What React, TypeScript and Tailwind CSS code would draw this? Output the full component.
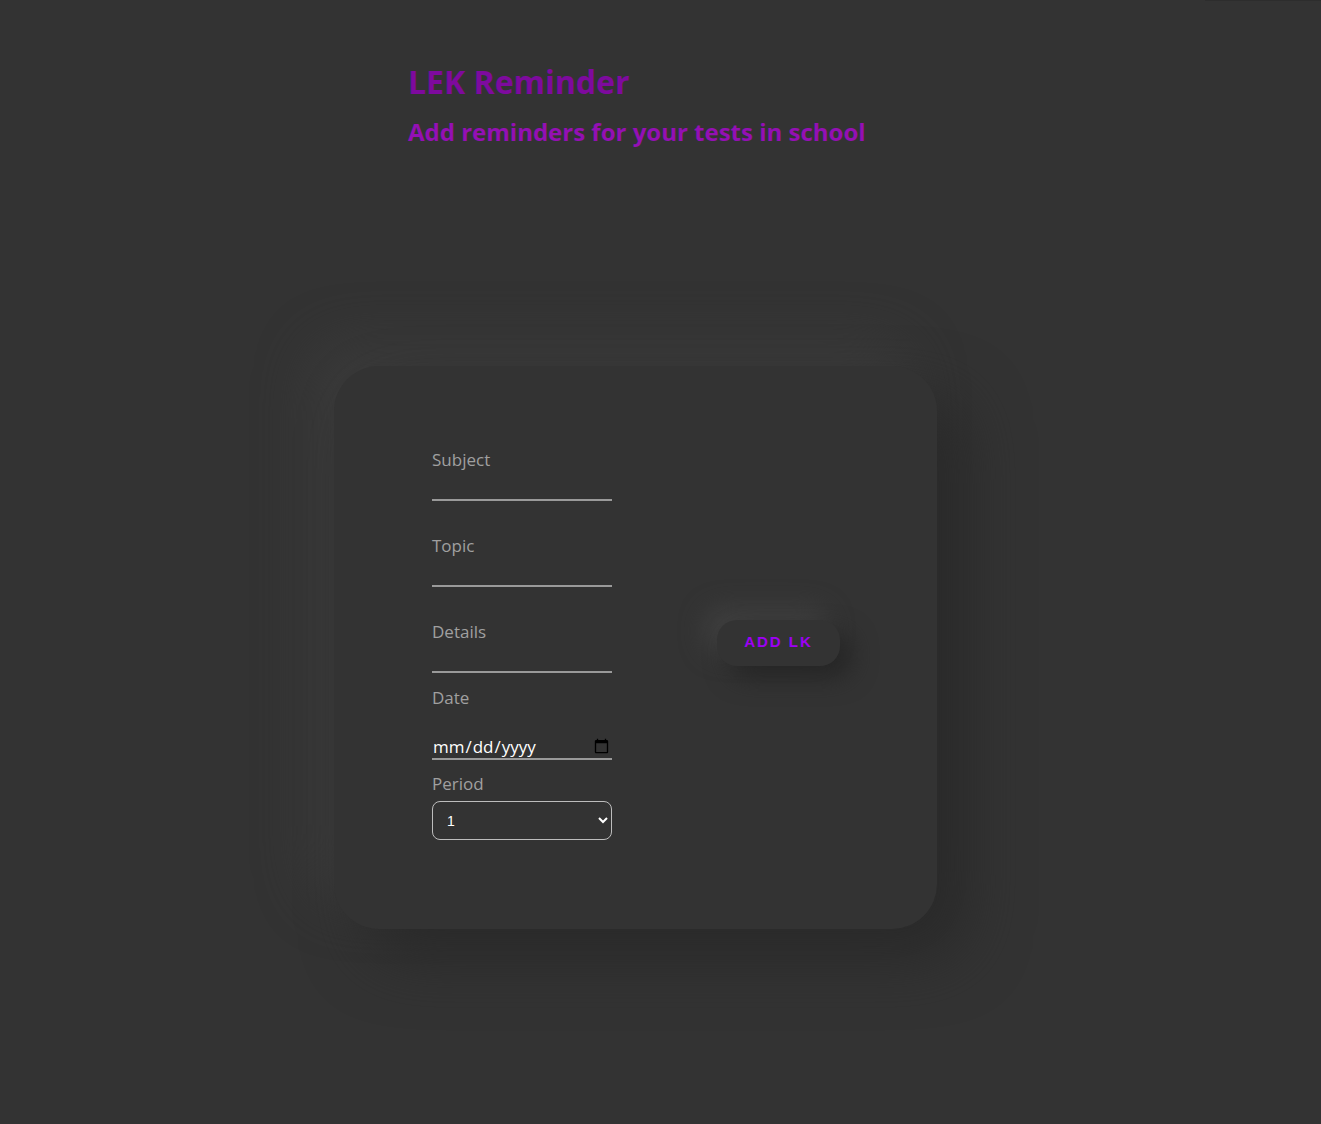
import React from 'react';

const labelCls = 'block h-[23px] text-[17px] leading-[23px] text-[#a0a0a0]';
const lineInputCls =
  'block w-full bg-transparent border-0 border-b-2 border-[#9a9a9a] text-white outline-none text-[17px]';

const TextField: React.FC<{ label: string }> = ({ label }) => (
  <div className="flex flex-col">
    <label className={labelCls}>{label}</label>
    <input type="text" className={`${lineInputCls} h-[30px]`} />
  </div>
);

const App: React.FC = () => {
  return (
    <div className="min-h-screen bg-[#333333] font-['Open_Sans',sans-serif] overflow-hidden">
      {/* faint bar at the top right */}
      <div className="flex justify-end">
        <div className="h-px w-[116px] bg-[#2d2d2d]" />
      </div>

      {/* Header */}
      <header className="ml-[408px] pt-[59px]">
        <h1 className="text-[32px] font-bold leading-[44px] text-[#7e0a9e]">LEK Reminder</h1>
        <h2 className="mt-[11px] text-[24px] font-bold leading-[33px] text-[#9410b4]">
          Add reminders for your tests in school
        </h2>
      </header>

      {/* Card */}
      <div className="ml-[334px] mt-[218px] flex h-[563px] w-[603px] items-start rounded-[45px] bg-[#333333] pb-[10px] pl-[98px] shadow-[30px_30px_60px_#2a2a2a,-25px_-25px_50px_#3b3b3b]">
        <form className="mt-[82px] flex w-[180px] flex-col" onSubmit={(e) => e.preventDefault()}>
          <TextField label="Subject" />
          <div className="h-[33px]" />
          <TextField label="Topic" />
          <div className="h-[33px]" />
          <TextField label="Details" />

          <div className="mt-[13px] flex flex-col">
            <label className={labelCls}>Date</label>
            <input
              type="date"
              className={`${lineInputCls} mt-[26px] h-[25px] leading-[23px]`}
            />
          </div>

          <div className="mt-[12px] flex flex-col">
            <label className={labelCls}>Period</label>
            <select className="mt-[6px] h-[39px] w-full rounded-[8px] border border-[#bdbdbd] bg-transparent pl-[10px] pr-[6px] font-['Liberation_Sans',Arial,sans-serif] text-[14px] text-white outline-none">
              <option className="bg-[#333333]">1</option>
              <option className="bg-[#333333]">2</option>
              <option className="bg-[#333333]">3</option>
              <option className="bg-[#333333]">4</option>
              <option className="bg-[#333333]">5</option>
              <option className="bg-[#333333]">6</option>
            </select>
          </div>
        </form>

        <button
          type="button"
          className="ml-[105px] h-[46px] w-[123px] self-center rounded-[20px] bg-[#333333] font-['Liberation_Sans',Arial,sans-serif] text-[15px] font-bold tracking-[2px] text-[#9d00f5] shadow-[12px_12px_24px_#262626,-12px_-12px_24px_#404040]"
        >
          ADD LK
        </button>
      </div>
    </div>
  );
};

export default App;
